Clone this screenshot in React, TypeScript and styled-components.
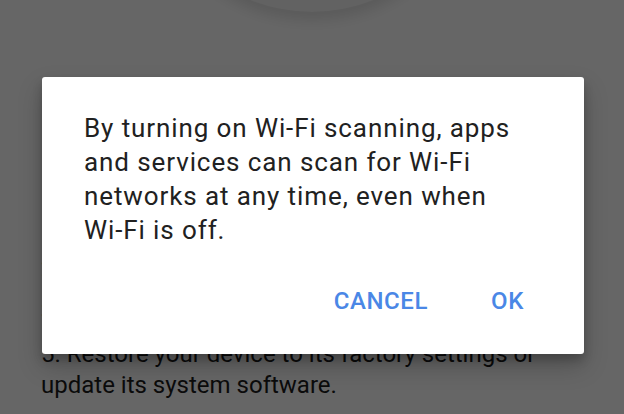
import styled, { createGlobalStyle } from "styled-components";

const GlobalStyle = createGlobalStyle`
  html, body {
    margin: 0;
    padding: 0;
    width: 624px;
    height: 414px;
    overflow: hidden;
    background: #ffffff;
  }
`;

const Screen = styled.div`
  position: relative;
  width: 624px;
  height: 414px;
  overflow: hidden;
  background: #ffffff;
  font-family: Roboto, "Liberation Sans", sans-serif;
`;

const Page = styled.div`
  height: 414px;
  box-sizing: border-box;
  display: flex;
  flex-direction: column;
  align-items: center;
  padding: 0 41px 13px;
  color: #1c1c1c;
`;

const Illustration = styled.div`
  width: 330px;
  height: 330px;
  margin-top: -318px;
  border-radius: 50%;
  background: #f4f4f4;
  box-shadow: 0 8px 14px rgba(0, 0, 0, 0.12);
  flex-shrink: 0;
`;

const Heading = styled.div`
  margin-top: 64px;
  font-size: 26px;
  font-weight: 500;
  flex-shrink: 0;
`;

const Steps = styled.div`
  align-self: stretch;
  display: flex;
  flex-direction: column;
  justify-content: flex-end;
  gap: 12px;
  margin-top: auto;
  overflow: hidden;
`;

const Step = styled.div`
  font-size: 24px;
  line-height: 31px;
  flex-shrink: 0;
`;

const Overlay = styled.div`
  position: absolute;
  inset: 0;
  background: rgba(0, 0, 0, 0.6);
  display: flex;
  justify-content: center;
  padding-top: 77px;
`;

const Dialog = styled.div`
  width: 542px;
  height: 277px;
  box-sizing: border-box;
  margin-left: 2px;
  background: #ffffff;
  border-radius: 3px;
  box-shadow: 0 12px 24px rgba(0, 0, 0, 0.22), 0 6px 10px rgba(0, 0, 0, 0.18);
  display: flex;
  flex-direction: column;
  padding: 34px 40px 0 42px;
`;

const Message = styled.p`
  margin: 0;
  font-size: 26px;
  line-height: 34px;
  color: #212121;
  letter-spacing: 0.9px;
`;

const Actions = styled.div`
  display: flex;
  justify-content: flex-end;
  gap: 63px;
  margin-top: 40px;
  padding-right: 20px;
`;

const ActionButton = styled.button`
  border: none;
  background: none;
  padding: 0;
  font-family: Roboto, "Liberation Sans", sans-serif;
  font-size: 24px;
  font-weight: 500;
  line-height: 28px;
  letter-spacing: 0.6px;
  color: #4a87e6;
  text-transform: uppercase;
  cursor: pointer;
`;

export default function App() {
  return (
    <>
      <GlobalStyle />
      <Screen>
        <Page>
          <Illustration />
          <Heading>Back up your data</Heading>
          <Steps>
            <Step>1. Add your Google Account to this device.</Step>
            <Step>2. Sync your data.</Step>
            <Step>3. Check for nearby networks.</Step>
            <Step>
              5. Restore your device to its factory settings or update its
              system software.
            </Step>
          </Steps>
        </Page>
        <Overlay>
          <Dialog>
            <Message>
              By turning on Wi-Fi scanning, apps
              <br />
              and services can scan for Wi-Fi
              <br />
              networks at any time, even when
              <br />
              Wi-Fi is off.
            </Message>
            <Actions>
              <ActionButton>Cancel</ActionButton>
              <ActionButton>OK</ActionButton>
            </Actions>
          </Dialog>
        </Overlay>
      </Screen>
    </>
  );
}
